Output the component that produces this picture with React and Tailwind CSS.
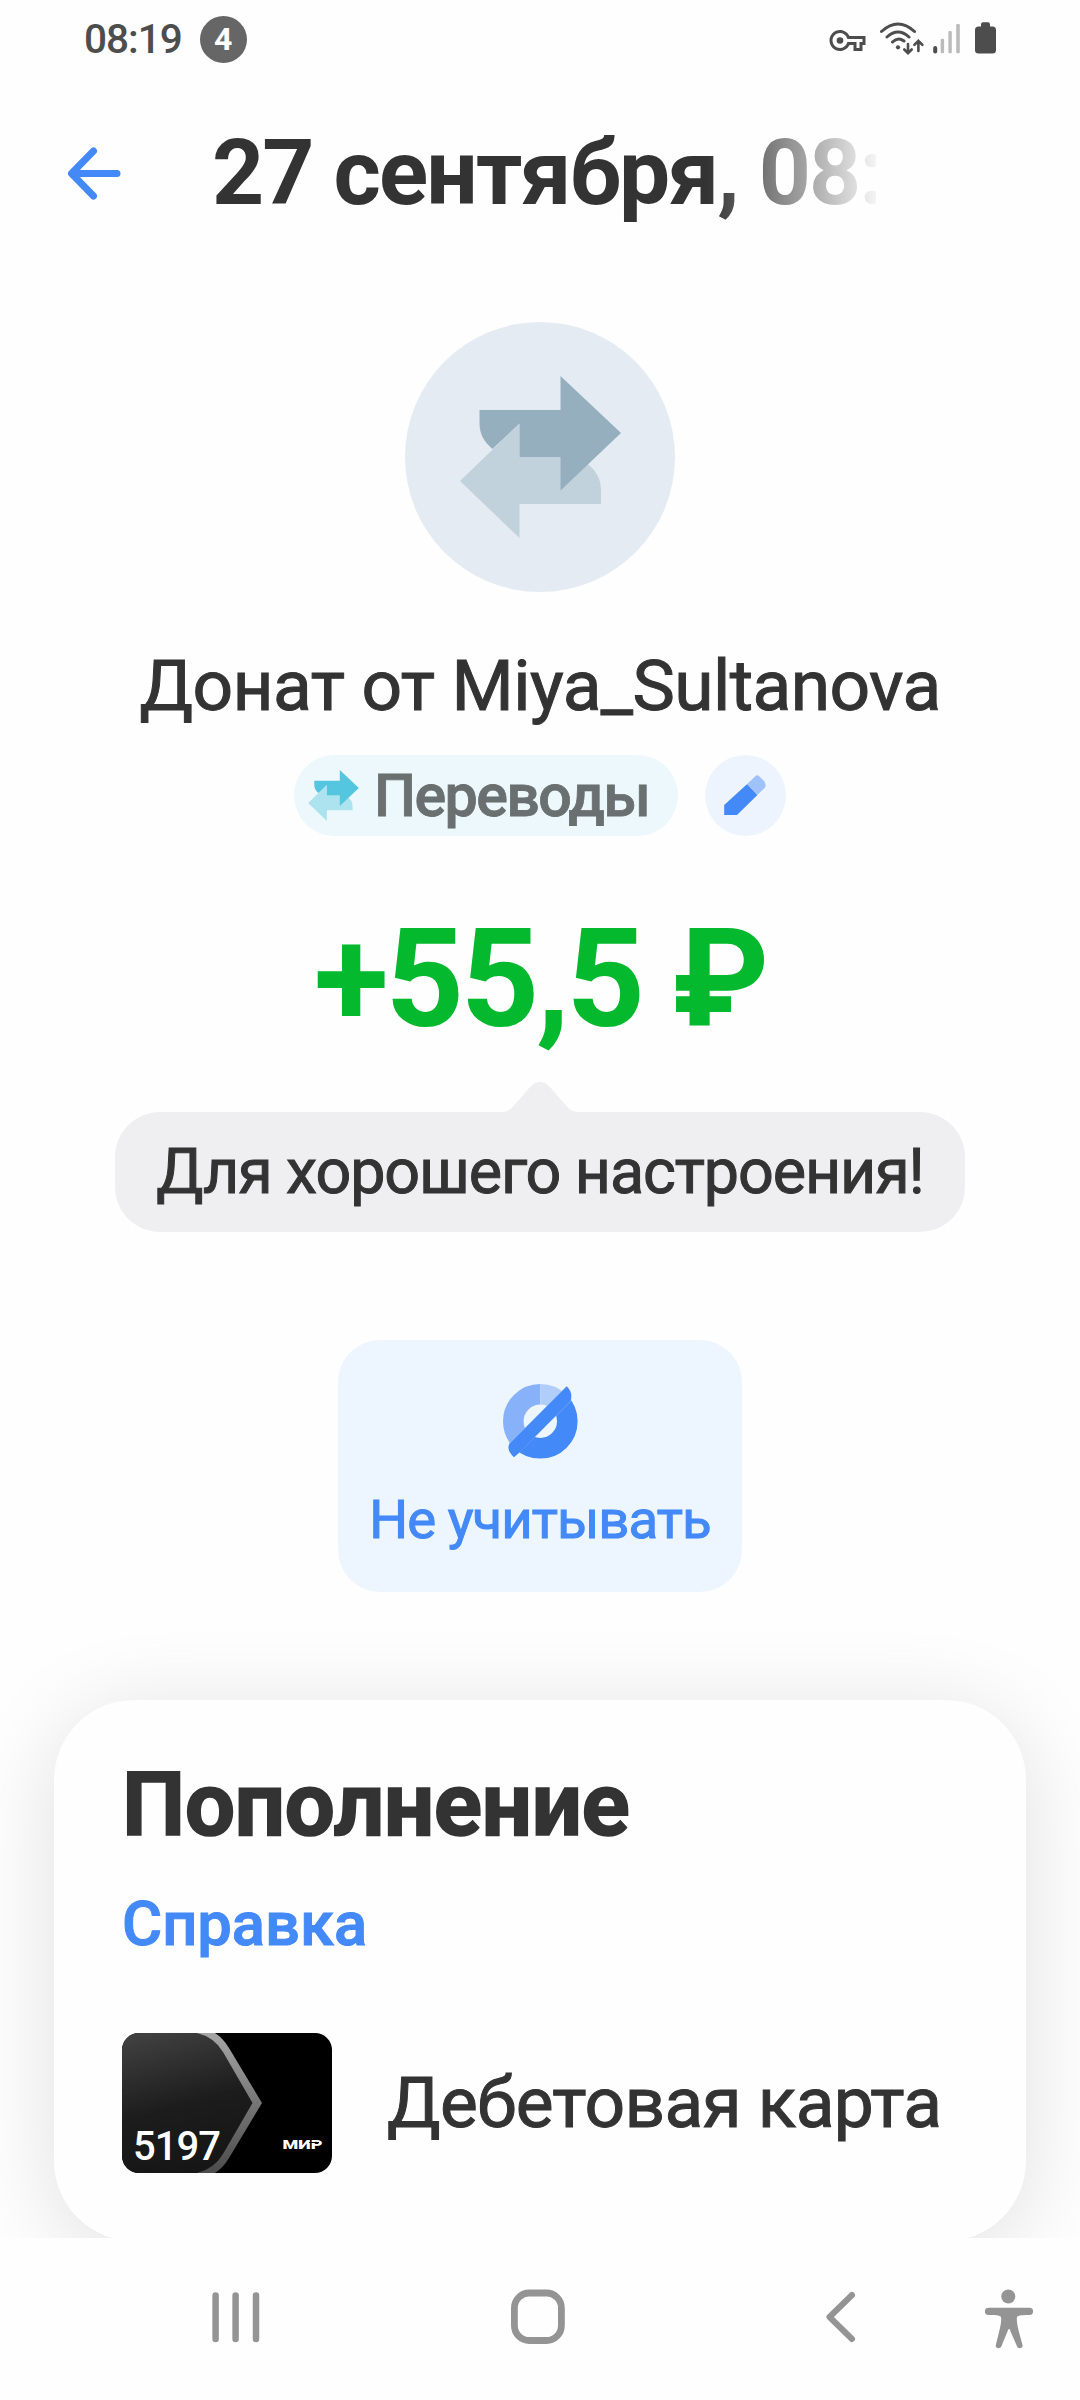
import React from 'react';

const StatusBar = () => (
  <div className="flex h-[78px] shrink-0 items-center justify-between pr-[84px] pl-[84px] text-[#4d4d4d]">
    <div className="flex items-center">
      <span className="text-[40.5px] leading-[48px] font-medium tracking-[-1px]">08:19</span>
      <span className="ml-[18px] flex h-[47px] w-[47px] items-center justify-center rounded-full bg-[#666666] text-[32px] font-bold text-white">
        4
      </span>
    </div>
    <div className="flex h-9 items-center">
      <svg className="mt-[2px] h-[21px] w-[37px]" viewBox="0 5 24 14" fill="currentColor">
        <path d="M22 19h-6v-4h-2.68c-1.14 2.42-3.6 4-6.32 4-3.86 0-7-3.14-7-7s3.14-7 7-7c2.72 0 5.17 1.58 6.32 4H24v6h-2v4zm-4-2h2v-4h2v-2H11.94l-.23-.67C11.01 8.34 9.11 7 7 7c-2.76 0-5 2.24-5 5s2.24 5 5 5c2.11 0 4.01-1.34 4.71-3.33l.23-.67H18v4z" />
        <circle cx="7" cy="12" r="2.2" />
      </svg>
      <svg className="ml-[13px] h-9 w-[47px]" viewBox="0 0 47 36" fill="none" stroke="currentColor" strokeWidth="3" strokeLinecap="round">
        <path d="M2.5 10.5Q19-4.5 35.5 10.5M8 16Q19 6 30 16M13.5 21Q19 15.5 25 20" />
        <circle cx="19" cy="26.3" r="2.1" fill="currentColor" stroke="none" />
        <path d="M29 23v8.5M25.3 28.5L29 32.2l3.7-3.7M39.4 30V20M35.4 23.8l4-4 4 4" strokeWidth="2.6" />
      </svg>
      <svg className="ml-[7px] h-9 w-[28px]" viewBox="0 0 28 36">
        <rect x="0.2" y="25" width="4" height="7.5" rx="2" fill="currentColor" />
        <rect x="7.7" y="17.7" width="3.4" height="14.6" rx="1.2" fill="#bbbbbb" />
        <rect x="15.4" y="10" width="3.4" height="22.3" rx="1.2" fill="#bbbbbb" />
        <rect x="23.2" y="3" width="3.6" height="29.3" rx="1.2" fill="#bbbbbb" />
      </svg>
      <svg className="ml-[14px] h-9 w-[21px]" viewBox="0 0 21 36" fill="currentColor">
        <rect x="0" y="5.5" width="21" height="27" rx="3.5" />
        <rect x="6" y="1.3" width="9" height="7" rx="2" />
      </svg>
    </div>
  </div>
);

const Header = () => (
  <header className="flex h-[190px] shrink-0 items-center pl-[66px]">
    <svg className="h-[56px] w-[56px]" viewBox="0 0 56 56" fill="none" stroke="#4389f7" strokeWidth="7" strokeLinecap="round" strokeLinejoin="round">
      <path d="M51 28.5H6M27.5 6L5.5 28.5l22 22.5" />
    </svg>
    {/* the long date fades out on the right */}
    <h1 className="ml-[90px] w-[664px] overflow-hidden text-[91px] leading-[110px] font-bold tracking-[-1.85px] whitespace-nowrap [mask-image:linear-gradient(to_right,black_495px,transparent_672px)]">
      27 сентября, 08:19
    </h1>
  </header>
);

const TransferArrows = ({ className, front, back }) => (
  <svg className={className} viewBox="0 0 161 162">
    <path d="M141 128H59.5v34L0 105 59.5 47.5V81h41L129 89C137 96 141 104 141 115z" fill={back} />
    <path d="M19.5 34h81V0L161 57l-60.5 57.5V81h-41V47.5L32.5 73C24 66 19.5 58 19.5 47z" fill={front} />
  </svg>
);

const Comment = ({ text }) => (
  <div className="mt-[23px] flex flex-col items-center">
    <svg className="h-[30px] w-[80px]" viewBox="0 0 80 30" fill="#efeff1">
      <path d="M0 30C8 30 10 28 14 23.5L31 4Q40-4 49 4L66 23.5C70 28 72 30 80 30z" />
    </svg>
    <div className="flex h-[120px] w-[850px] items-center justify-center rounded-[45px] bg-[#efeff1] text-[62.8px] tracking-[-1.1px] whitespace-nowrap [-webkit-text-stroke:1px]">
      {text}
    </div>
  </div>
);

const ExcludeIcon = () => (
  <svg className="h-[75px] w-[75px]" viewBox="0 0 75 75">
    <clipPath id="left">
      <path d="M0 0h37.3v28.7L0 66z" />
    </clipPath>
    <clipPath id="top">
      <path d="M37.3 0H66L37.3 28.7z" />
    </clipPath>
    <clipPath id="bottom">
      <path d="M75 9.7V75H9.7z" />
    </clipPath>
    <g fill="none" strokeWidth="20.6">
      <circle cx="37.3" cy="37.3" r="27" stroke="#87b2fa" clipPath="url(#left)" />
      <circle cx="37.3" cy="37.3" r="27" stroke="#b0cdfc" clipPath="url(#top)" />
      <circle cx="37.3" cy="37.3" r="27" stroke="#4389f7" clipPath="url(#bottom)" />
    </g>
    <path d="M63.7 2.3Q70 8 67.7 17L16.5 68.5 11 73.3Q3 66 6.5 59.5z" fill="#4389f7" />
  </svg>
);

const BankCard = () => (
  <svg className="h-[140px] w-[210px] shrink-0 rounded-[17px]" viewBox="0 0 210 140">
    <defs>
      <linearGradient id="cardFace" x1="0.2" y1="0" x2="0.45" y2="1">
        <stop offset="0" stopColor="#404040" />
        <stop offset="0.55" stopColor="#1c1c1c" />
        <stop offset="1" stopColor="#161616" />
      </linearGradient>
      <linearGradient id="cardEdge" x1="0" y1="0" x2="0" y2="1">
        <stop offset="0" stopColor="#a6a6a6" />
        <stop offset="0.5" stopColor="#767676" />
        <stop offset="1" stopColor="#4c4c4c" />
      </linearGradient>
    </defs>
    <rect width="210" height="140" fill="#000000" />
    <path d="M75 0H93Q101 5 107 15L140 70 107 125Q101 135 93 140H75z" fill="url(#cardEdge)" />
    <path d="M0 0H75Q92 4 101 19L130.5 70 101 121Q92 136 75 140H0z" fill="url(#cardFace)" />
    <text x="11" y="127" fill="#ffffff" className="text-[40px] font-medium tracking-[-1px]">
      5197
    </text>
    <text x="160.5" y="115.7" fill="#ffffff" className="text-[13.5px] font-black" textLength="40" lengthAdjust="spacingAndGlyphs">
      МИР
    </text>
    <path d="M187 109.5h10" stroke="#000000" strokeWidth="1" />
  </svg>
);

const NavBar = () => (
  <nav className="flex h-[162px] shrink-0 items-start bg-[#fefefe] pt-[46px] pl-[210px]">
    <svg className="h-[66px] w-[52px]" viewBox="0 0 52 66" stroke="#949494" strokeWidth="6.5" strokeLinecap="round">
      <path d="M5.6 11.5v43.5M25.6 11.5v43.5M46 11.5v43.5" />
    </svg>
    <svg className="ml-[246px] h-[66px] w-[60px]" viewBox="0 0 60 66" fill="none" stroke="#949494" strokeWidth="6.8">
      <rect x="6.4" y="9" width="47" height="47.5" rx="15" />
    </svg>
    <svg className="ml-[252px] h-[66px] w-[40px]" viewBox="0 0 40 66" fill="none" stroke="#949494" strokeWidth="6" strokeLinecap="round" strokeLinejoin="round">
      <path d="M32 11L9.5 33 32 55" />
    </svg>
    <svg className="ml-[125px] h-[66px] w-[50px]" viewBox="0 0 50 66" fill="#949494">
      <circle cx="23.3" cy="12.5" r="7" />
      <path d="M3.5 23.7h41a3.6 3.6 0 0 1 0 7.2c-5 0-12 .3-12.5 2-.6 4 .5 9 1.7 14L37.5 61c.8 3.5-4.5 4.5-5.6 1L24.5 45h-1l-7 17c-1.2 3.5-6.5 2.5-5.7-1l3.5-14c1.2-5 2.3-10 1.7-14-.5-1.7-7.5-2-12.5-2a3.6 3.6 0 0 1 0-7.3z" />
    </svg>
  </nav>
);

const App = () => (
  <div className="flex h-[2400px] w-[1080px] flex-col overflow-hidden bg-[#fefefe] font-['Roboto',sans-serif] text-[#333333]">
    <main className="flex h-[2238px] shrink-0 flex-col overflow-hidden">
      <StatusBar />
      <Header />

      {/* Operation summary */}
      <section className="flex flex-col items-center pt-[54px]">
        <div className="flex h-[270px] w-[270px] items-center justify-center rounded-full bg-[#e4ebf3]">
          <TransferArrows className="h-[162px] w-[161px]" front="#95afbf" back="#c1d2dc" />
        </div>
        <h2 className="mt-[52px] text-[71.3px] leading-[84px] tracking-[-0.58px] whitespace-nowrap [-webkit-text-stroke:1px]">
          Донат от Miya_Sultanova
        </h2>
        <div className="mt-[27px] flex gap-[27px]">
          <div className="flex h-[81px] w-[384px] items-center rounded-full bg-[#ecf8fb] pl-[14px]">
            <TransferArrows className="h-[51px] w-[51px]" front="#55c6df" back="#ace3ef" />
            <span className="ml-[15px] text-[59.2px] leading-[70px] font-medium tracking-[-1.6px] text-[#6a6f70] [-webkit-text-stroke:0.8px]">
              Переводы
            </span>
          </div>
          <button className="h-[81px] w-[81px] rounded-full bg-[#eef4fe]">
            <svg className="h-[81px] w-[81px]" viewBox="0 0 81 81">
              <path d="M42.2 29L19.2 50v10H32L52.4 40z" fill="#4389f7" />
              <path d="M42.2 29L50.5 21Q52.4 19.5 54.5 21.5L59 26Q61.5 29.5 60 32.5L52.4 40z" fill="#9fc2fb" />
            </svg>
          </button>
        </div>
        <div className="mt-[63px] text-[137px] leading-[160px] font-bold tracking-[-3.3px] whitespace-nowrap text-[#05b92f]">+55,5 ₽</div>
        <Comment text="Для хорошего настроения!" />
        <button className="mt-[108px] flex h-[252px] w-[404px] flex-col items-center rounded-[42px] bg-[#edf5ff] pt-[44px]">
          <ExcludeIcon />
          <span className="mt-[28px] text-[54.5px] leading-[64px] tracking-[-0.95px] whitespace-nowrap text-[#4389f7] [-webkit-text-stroke:1px]">
            Не учитывать
          </span>
        </button>
      </section>

      {/* Details card */}
      <section className="mx-[54px] mt-[108px] h-[541px] shrink-0 rounded-[80px] bg-[#fefefe] pt-[55px] pl-[68px] shadow-[0_12px_90px_rgba(0,0,0,0.12)]">
        <h3 className="text-[89.5px] leading-[100px] font-bold tracking-[-0.65px] [-webkit-text-stroke:1.5px]">Пополнение</h3>
        <a className="mt-[34px] block text-[61.5px] leading-[70px] font-medium text-[#4389f7] [-webkit-text-stroke:1px]">Справка</a>
        <div className="mt-[74px] flex items-center">
          <BankCard />
          <span className="ml-[55px] text-[71.3px] leading-[84px] tracking-[-0.73px] whitespace-nowrap [-webkit-text-stroke:1px]">
            Дебетовая карта
          </span>
        </div>
      </section>
    </main>
    <NavBar />
  </div>
);

export default App;
